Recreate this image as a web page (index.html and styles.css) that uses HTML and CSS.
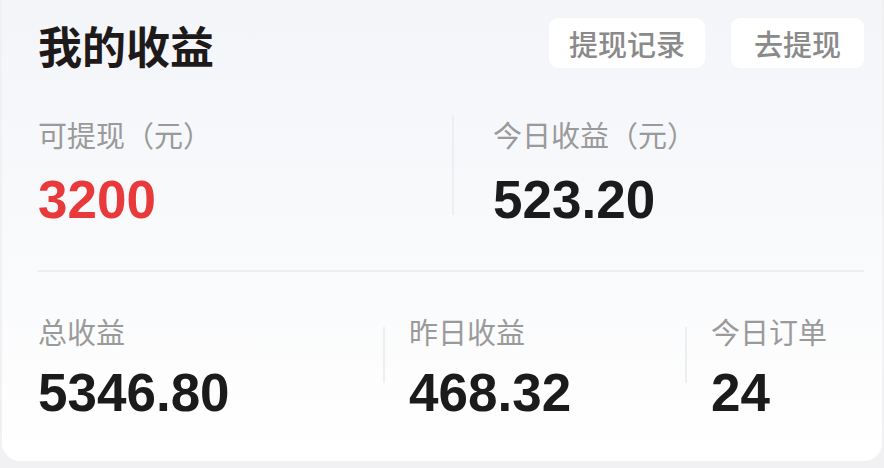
FILE: index.html
```html
<!DOCTYPE html>
<html lang="zh-CN">
<head>
<meta charset="utf-8">
<title>我的收益</title>
<link rel="stylesheet" href="styles.css">
</head>
<body>
<div class="card">
  <div class="header">
    <div class="title">我的收益</div>
    <div class="actions">
      <div class="btn btn-record">提现记录</div>
      <div class="btn btn-withdraw">去提现</div>
    </div>
  </div>
  <div class="row row-top">
    <div class="cell cell-a">
      <div class="label">可提现（元）</div>
      <div class="value red">3200</div>
    </div>
    <div class="vdiv vdiv-top"></div>
    <div class="cell cell-b">
      <div class="label">今日收益（元）</div>
      <div class="value">523.20</div>
    </div>
  </div>
  <div class="hdiv"></div>
  <div class="row row-bottom">
    <div class="cell cell-c1">
      <div class="label">总收益</div>
      <div class="value">5346.80</div>
    </div>
    <div class="vdiv vdiv-bottom"></div>
    <div class="cell cell-c2">
      <div class="label">昨日收益</div>
      <div class="value">468.32</div>
    </div>
    <div class="vdiv vdiv-bottom"></div>
    <div class="cell cell-c3">
      <div class="label">今日订单</div>
      <div class="value">24</div>
    </div>
  </div>
</div>
</body>
</html>
```

FILE: styles.css
```css
* { box-sizing: border-box; }
html, body { margin: 0; padding: 0; }
body {
  width: 884px;
  height: 468px;
  background: #f1f1f3;
  font-family: "Noto Sans CJK SC", "Noto Sans", sans-serif;
  overflow: hidden;
}
.card {
  height: 461px;
  margin: 0 2px;
  padding: 0 18px 0 36px;
  border-radius: 0 0 18px 18px;
  background: linear-gradient(180deg, #f4f5f9 0%, #f8f9fb 45%, #ffffff 100%);
}
.header {
  display: flex;
  justify-content: space-between;
  align-items: center;
  padding-top: 18px;
  height: 68px;
}
.title {
  font-size: 44px;
  font-weight: 700;
  color: #1f1a1a;
  line-height: 54px;
  margin-top: 4px;
}
.actions {
  display: flex;
  gap: 26px;
}
.btn {
  height: 50px;
  line-height: 50px;
  text-align: center;
  background: #ffffff;
  border-radius: 9px;
  font-size: 29px;
  color: #8a8a8a;
  font-weight: 500;
}
.btn-record { width: 156px; }
.btn-withdraw { width: 133px; }
.row {
  display: flex;
}
.row-top {
  margin-top: 46px;
}
.label {
  font-size: 29px;
  line-height: 40px;
  color: #9a9a9a;
}
.value {
  font-family: "Liberation Sans", Arial, sans-serif;
  font-weight: 700;
  font-size: 53px;
  line-height: 60px;
  color: #1b1b1b;
}
.row-top .value { margin-top: 16px; }
.red { color: #e8393b; }
.cell-a { width: 414px; }
.cell-b { padding-left: 39px; }
.vdiv {
  width: 2px;
  background: #eceef2;
}
.vdiv-top {
  height: 100px;
  margin-top: 1px;
}
.hdiv {
  height: 2px;
  margin-top: 40px;
  background: #eceef2;
}
.row-bottom {
  margin-top: 39px;
}
.row-bottom .value { margin-top: 12px; }
.vdiv-bottom {
  height: 56px;
  margin-top: 16px;
}
.cell-c1 { width: 345px; }
.cell-c2 { width: 300px; padding-left: 24px; }
.cell-c3 { padding-left: 24px; }
```
